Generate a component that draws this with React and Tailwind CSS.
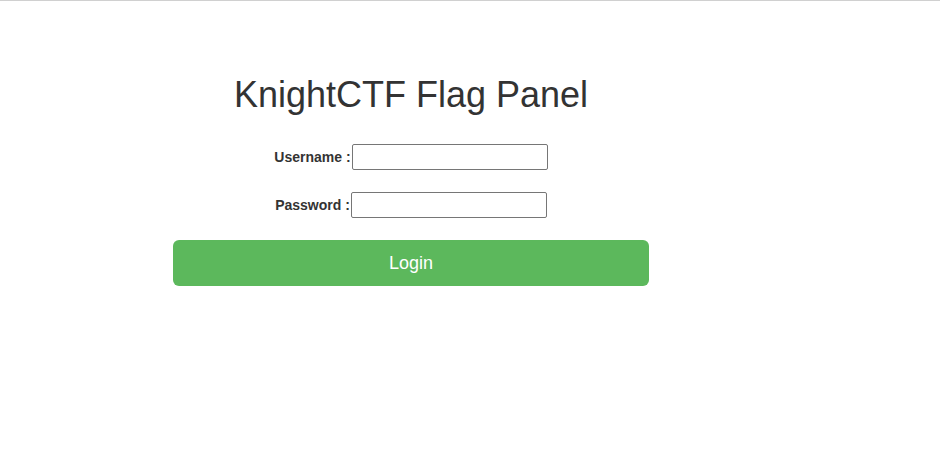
import React from "react";

export default function App() {
  return (
    <div className="min-h-screen bg-white border-t border-[#d0d0d0] font-['Liberation_Sans',Arial,sans-serif] text-[#333]">
      <div className="w-[476px] ml-[173px] pt-[72px]">
        <h1 className="text-center text-[36px] leading-[44px] font-normal">KnightCTF Flag Panel</h1>

        <div className="mt-[27px] flex justify-center items-center">
          <label className="text-[14px] font-bold mr-[1px]">Username :</label>
          <input
            type="text"
            className="w-[196px] h-[26px] border border-[#767676] rounded-[2px] bg-white"
          />
        </div>

        <div className="mt-[22px] flex justify-center items-center">
          <label className="text-[14px] font-bold mr-[1px]">Password :</label>
          <input
            type="password"
            className="w-[196px] h-[26px] border border-[#767676] rounded-[2px] bg-white"
          />
        </div>

        <button className="mt-[22px] w-full h-[46px] bg-[#5cb85c] text-white text-[18px] rounded-[6px]">
          Login
        </button>
      </div>
    </div>
  );
}
